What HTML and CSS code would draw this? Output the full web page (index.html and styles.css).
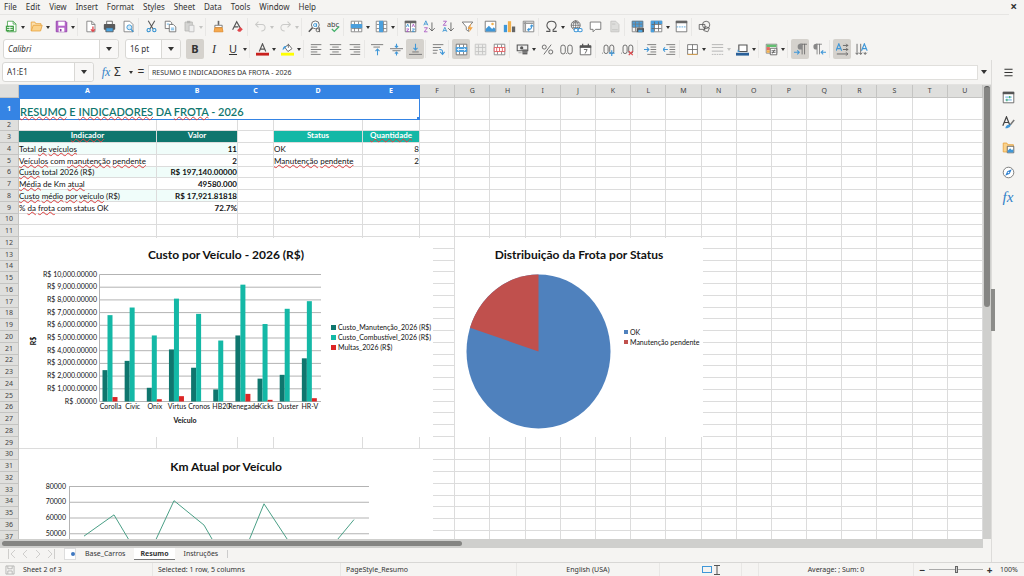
FILE: index.html
```html
<!DOCTYPE html>
<html lang="pt-BR">
<head>
<meta charset="utf-8">
<title>Resumo - Frota 2026</title>
<link rel="stylesheet" href="styles.css">
</head>
<body>

<svg class="sprite" aria-hidden="true">
  <!-- standard toolbar -->
  <symbol id="i-new" viewBox="0 0 16 16"><path d="M3 1.5h7l3.5 3.5v9.500H3z" fill="#fff" stroke="#43a047"/><path d="M1 7h10v7H1z" fill="#43a047"/><path d="M2.500 9.300h7M2.500 11.700h7M6 8v5" stroke="#fff"/><path d="M10 1.500V5h3.500" fill="none" stroke="#43a047"/></symbol>
  <symbol id="i-open" viewBox="0 0 16 16"><path d="M1.500 13.500v-11h4.500l1 2h6.500v2" fill="#fbe0ae" stroke="#e8a33d"/><path d="M1.500 13.500l2.500-7h11l-2 7z" fill="#fbd28b" stroke="#e8a33d"/></symbol>
  <symbol id="i-save" viewBox="0 0 16 16"><path d="M1.500 1.500h11.500l1.500 1.500v11.500h-13z" fill="#b565c9" stroke="#8e3aa6"/><path d="M4 2h8v5H4z" fill="#fff"/><path d="M4.500 9.500h7v5h-7z" fill="#fff"/><path d="M6 11h2v3H6z" fill="#8e3aa6"/></symbol>
  <symbol id="i-pdf" viewBox="0 0 16 16"><path d="M3.500 14.500v-13h6l4 4v9z" fill="#fff" stroke="#777"/><path d="M9.500 1.500v4h4" fill="none" stroke="#777"/><path d="M11 8v6M8.500 11.500L11 14l2.500-2.500" fill="none" stroke="#e0474c" stroke-width="1.600"/></symbol>
  <symbol id="i-print" viewBox="0 0 16 16"><path d="M4.500 1.500h7v4h-7z" fill="#fff" stroke="#555"/><rect x="1" y="5" width="14" height="7" rx="1" fill="#5a5a5a"/><path d="M3.500 9.500h9v5h-9z" fill="#4aa3df" stroke="#555"/></symbol>
  <symbol id="i-preview" viewBox="0 0 16 16"><path d="M2.500 14.500v-13h7l4 4v9z" fill="#fff" stroke="#777"/><circle cx="9" cy="9" r="3" fill="#d4ebfa" stroke="#2f8fd0"/><path d="M11 11.500l3 3" stroke="#2f8fd0" stroke-width="1.500"/></symbol>
  <symbol id="i-cut" viewBox="0 0 16 16"><path d="M4 1l6 10M12 1L6 11" stroke="#555" stroke-width="1.300"/><circle cx="4.500" cy="12.500" r="2" fill="none" stroke="#2f8fd0" stroke-width="1.300"/><circle cx="11.500" cy="12.500" r="2" fill="none" stroke="#2f8fd0" stroke-width="1.300"/></symbol>
  <symbol id="i-copy" viewBox="0 0 16 16"><path d="M1.500 1.500h6l2 2v7h-8z" fill="#fff" stroke="#666"/><path d="M6.500 5.500h5l3 3v6h-8z" fill="#fff" stroke="#666"/><path d="M8.500 10h4M8.500 12h4M3.500 5h3" stroke="#4aa3df"/></symbol>
  <symbol id="i-paste" viewBox="0 0 16 16"><path d="M2.500 2.500h9v11h-9z" fill="#d5d5d3" stroke="#b5b5b3"/><path d="M5 1h4v3H5z" fill="#b5b5b3"/><path d="M7.500 6.500h6v8h-6z" fill="#efefef" stroke="#bbb"/></symbol>
  <symbol id="i-clone" viewBox="0 0 16 16"><path d="M8 1v5" stroke="#666" stroke-width="2"/><path d="M3.500 6.500h9v3h-9z" fill="#fff" stroke="#666"/><path d="M3.500 9.500h9l1 5h-11z" fill="#f5a94d" stroke="#e08a2a"/></symbol>
  <symbol id="i-clear" viewBox="0 0 16 16"><path d="M2 12L7 2l4.500 8M4 8.500h5" fill="none" stroke="#555" stroke-width="1.400"/><path d="M7.500 12.500l4-4 3 3-3 3h-2z" fill="#e0474c"/></symbol>
  <symbol id="i-undo" viewBox="0 0 16 16"><path d="M5.500 2L2 5.500 5.500 9M2 5.500h8c5 0 5 8-1 8" fill="none" stroke="#cacac8" stroke-width="1.300"/></symbol>
  <symbol id="i-redo" viewBox="0 0 16 16"><path d="M10.500 2L14 5.500 10.500 9M14 5.500H6c-5 0-5 8 1 8" fill="none" stroke="#cacac8" stroke-width="1.300"/></symbol>
  <symbol id="i-find" viewBox="0 0 16 16"><circle cx="9" cy="6" r="4.800" fill="#fff" stroke="#555"/><path d="M5.500 9.500L1 14.500" stroke="#555" stroke-width="1.800"/><circle cx="8.600" cy="6.200" r="1.800" fill="none" stroke="#2f8fd0"/><path d="M10.600 4v4.500" stroke="#2f8fd0"/><circle cx="12" cy="12.500" r="2" fill="none" stroke="#555"/><path d="M14.200 9v6" stroke="#555"/></symbol>
  <symbol id="i-spell" viewBox="0 0 16 16"><text x="0" y="8" font-size="9" fill="#444">abc</text><path d="M6 11l3 3 6-6" fill="none" stroke="#43b06a" stroke-width="1.600"/></symbol>
  <symbol id="i-row" viewBox="0 0 16 16"><path d="M1.500 1.500h13v13h-13zM5.500 2v12M10.500 2v12M2 5.500h12M2 10.500h12" fill="#fff" stroke="#777"/><path d="M1 5h14v5H1z" fill="#4a9fdd"/></symbol>
  <symbol id="i-col" viewBox="0 0 16 16"><path d="M1.500 1.500h13v13h-13zM5.500 2v12M10.500 2v12M2 5.500h12M2 10.500h12" fill="#fff" stroke="#777"/><path d="M5 1h5v14H5z" fill="#4a9fdd"/></symbol>
  <symbol id="i-sort" viewBox="0 0 16 16"><path d="M1.500 1.500h13v13h-13zM8 2v12" fill="#fff" stroke="#666"/><path d="M1 1h14v3H1z" fill="#666"/><path d="M3 8.500l1.500-3.500L6 8.500M10 11h3l-3 3h3" fill="none" stroke="#2f8fd0"/><path d="M3 11h3l-3 3h3M10 8.500L11.500 5 13 8.500" fill="none" stroke="#a54fc0"/></symbol>
  <symbol id="i-az" viewBox="0 0 16 16"><path d="M1 6.500L3.500 1 6 6.500M2 5h3" fill="none" stroke="#2f8fd0"/><path d="M1.500 9.500h4l-4 5h4" fill="none" stroke="#a54fc0"/><path d="M11 3v10.500M7.500 10l3.500 3.500 3.500-3.500" fill="none" stroke="#555"/></symbol>
  <symbol id="i-za" viewBox="0 0 16 16"><path d="M1 14.500L3.500 9 6 14.500M2 13h3" fill="none" stroke="#2f8fd0"/><path d="M1.500 1.500h4l-4 5h4" fill="none" stroke="#a54fc0"/><path d="M11 3v10.500M7.500 10l3.500 3.500 3.500-3.500" fill="none" stroke="#555"/></symbol>
  <symbol id="i-filter" viewBox="0 0 16 16"><path d="M1.500 2.500h13l-5 6v5.500l-3-2V8.500z" fill="#fff" stroke="#666"/><path d="M12.500 4l-4.500 7h3l-1 4 4.500-6h-3z" fill="#f2a444"/></symbol>
  <symbol id="i-image" viewBox="0 0 16 16"><path d="M1.500 1.500h13v13h-13z" fill="#fff" stroke="#666"/><path d="M2 14v-3l4-4 4 4 2-2 2 2v3z" fill="#3f97d8"/><circle cx="10.500" cy="5" r="1.600" fill="#f2b04d"/></symbol>
  <symbol id="i-chart" viewBox="0 0 16 16"><path d="M1 6h4v9H1z" fill="#3f97d8"/><path d="M6 1.500h4v13.500H6z" fill="#f2b04d"/><path d="M11 8h4v7h-4z" fill="#666"/></symbol>
  <symbol id="i-pivot" viewBox="0 0 16 16"><path d="M1.500 1.500h13v13h-13z" fill="#fff" stroke="#777"/><path d="M2 4h12M4 2v12" stroke="#999" stroke-width="2"/><path d="M7 12c4 0 5-2 5-5M10 8l2-2 2 2M9 10l-2 2 2 2" fill="none" stroke="#3f97d8" stroke-width="1.300"/></symbol>
  <symbol id="i-omega" viewBox="0 0 16 16"><path d="M1.500 14h4.500v-2C0 8 2 1.500 8 1.500s8 6.500 2 10.500v2h4.500" fill="none" stroke="#555" stroke-width="1.300"/></symbol>
  <symbol id="i-link" viewBox="0 0 16 16"><circle cx="7" cy="6.500" r="5.500" fill="#fff" stroke="#555"/><path d="M1.500 6.500h11M7 1v11M3 3.500h8M3 9.500h8M7 1c-4 3-4 8 0 11M7 1c4 3 4 8 0 11" fill="none" stroke="#555" stroke-width="0.800"/><rect x="5" y="10.500" width="5" height="4" rx="2" fill="#fff" stroke="#3f97d8" stroke-width="1.300"/><rect x="10" y="10.500" width="5" height="4" rx="2" fill="#fff" stroke="#3f97d8" stroke-width="1.300"/></symbol>
  <symbol id="i-comment" viewBox="0 0 16 16"><path d="M1.500 2.500h13v9H8l-3 3v-3H1.500z" fill="#fff" stroke="#666"/></symbol>
  <symbol id="i-page" viewBox="0 0 16 16"><path d="M3.500 1.500h6l4 4v9h-10z" fill="#dededc" stroke="#c0c0be"/><path d="M5 5h4M5 12h7" stroke="#c0c0be"/></symbol>
  <symbol id="i-area" viewBox="0 0 16 16"><path d="M1 1h14v8H1z" fill="#4a9fdd"/><path d="M1.500 1.500h13v13h-13zM5.500 2v12M10 2v12M2 5h12M2 9h12" fill="none" stroke="#777"/><path d="M7 10h9v5H7z" fill="#555"/><path d="M9 12h5v3H9z" fill="#4aa3df"/></symbol>
  <symbol id="i-freeze" viewBox="0 0 16 16"><path d="M1.500 1.500h13v13h-13z" fill="#fff" stroke="#777"/><path d="M1 1h14v4H1zM1 1h4v14H1z" fill="#4a9fdd"/><path d="M5.500 2v12M10.500 2v12M2 5.500h12M2 10.500h12" stroke="#666"/></symbol>
  <symbol id="i-split" viewBox="0 0 16 16"><path d="M1.500 1.500h13v13h-13z" fill="#fff" stroke="#666"/><path d="M1 1h14v3H1z" fill="#666"/><path d="M2 8.500h12" stroke="#3f97d8" stroke-dasharray="2 1"/></symbol>
  <symbol id="i-shapes" viewBox="0 0 16 16"><circle cx="10" cy="6" r="4.500" fill="#f5f4f2" stroke="#555"/><path d="M1.500 5.500h7v6h-7z" fill="none" stroke="#555"/><path d="M9 8l5 2-2 4.500-5-1.500z" fill="none" stroke="#555"/></symbol>
  <!-- formatting toolbar -->
  <symbol id="i-fontcolor" viewBox="0 0 16 16"><path d="M4 10.500L8 1l4 9.500M5.500 7.500h5" fill="none" stroke="#555" stroke-width="1.400"/><path d="M0 12h16v3.500H0z" fill="#c9211e"/></symbol>
  <symbol id="i-highlight" viewBox="0 0 16 16"><path d="M4.500 5l5-3 4 5-5 3.500z" fill="#fff" stroke="#555"/><path d="M2 9c0-4 2-6 5-5l-2 2z" fill="#3f97d8"/><path d="M9 1v5" stroke="#555"/><path d="M0 12h16v3.500H0z" fill="#ffff00"/></symbol>
  <symbol id="i-left" viewBox="0 0 16 16"><path d="M1 2h13M1 5h8M1 8h13M1 11h8M1 14h12" stroke="#666"/></symbol>
  <symbol id="i-center" viewBox="0 0 16 16"><path d="M1 2h14M4 5h8M1 8h14M4 11h8M1 14h14" stroke="#666"/></symbol>
  <symbol id="i-right" viewBox="0 0 16 16"><path d="M2 2h13M7 5h8M2 8h13M7 11h8M3 14h12" stroke="#666"/></symbol>
  <symbol id="i-top" viewBox="0 0 16 16"><path d="M0 2h15M3 5h8" stroke="#666"/><path d="M8 15V7.500M5.500 10L8 7.500l2.500 2.500" fill="none" stroke="#3f97d8" stroke-width="1.300"/></symbol>
  <symbol id="i-middle" viewBox="0 0 16 16"><path d="M0 7h16M3 9.500h10" stroke="#666"/><path d="M8 1v4.500M6 3.500l2 2 2-2M8 15.500V11M6 13l2-2 2 2" fill="none" stroke="#3f97d8" stroke-width="1.300"/></symbol>
  <symbol id="i-bottom" viewBox="0 0 16 16"><path d="M0 14h16M4 11h8" stroke="#666"/><path d="M8 1v7.500M5.500 6L8 8.500 10.500 6" fill="none" stroke="#3f97d8" stroke-width="1.300"/></symbol>
  <symbol id="i-wrap" viewBox="0 0 16 16"><path d="M1 2h13M1 5.500h10M1 9h6M1 12.500h5" stroke="#666"/><path d="M9 8c4 0 4 1 4 5M10 11l3 3 2.500-3" fill="none" stroke="#3f97d8" stroke-width="1.300"/></symbol>
  <symbol id="i-merge" viewBox="0 0 16 16"><path d="M1.500 1.500h13v13h-13zM5.500 2v3M10.500 2v3M5.500 11v3M10.500 11v3" fill="#fff" stroke="#666"/><path d="M1 5h14v6H1z" fill="#4a9fdd"/><path d="M3 8h10M5 6.500L3 8l2 1.500M11 6.500L13 8l-2 1.500" fill="none" stroke="#fff"/></symbol>
  <symbol id="i-unmerge" viewBox="0 0 16 16"><path d="M1.500 1.500h13v13h-13zM5.500 2v12M10.500 2v12M2 5.500h12M2 10.500h12" fill="#ededeb" stroke="#c2c2c0"/></symbol>
  <symbol id="i-splitcell" viewBox="0 0 16 16"><path d="M1.500 1.500h13v13h-13zM5.500 2v12M10.500 2v12" fill="#fff" stroke="#777"/><path d="M1.500 5.500h13v5h-13zM8 6v4M4.500 6v4M11.500 6v4" fill="#fff" stroke="#e0474c"/></symbol>
  <symbol id="i-money" viewBox="0 0 16 16"><path d="M1.500 2.500h13v7h-13z" fill="#eee" stroke="#555" stroke-width="1.300"/><circle cx="7" cy="6" r="2" fill="#555"/><path d="M8 8h6v6H8z" fill="#555"/><path d="M3 12h4M8 10h6M8 12h6" stroke="#999"/></symbol>
  <symbol id="i-percent" viewBox="0 0 16 16"><circle cx="4" cy="5" r="2.500" fill="none" stroke="#555"/><circle cx="12" cy="11" r="2.500" fill="none" stroke="#555"/><path d="M12.500 2l-9 12" stroke="#555"/></symbol>
  <symbol id="i-number" viewBox="0 0 16 16"><rect x="1" y="2.500" width="5.500" height="11" rx="2.700" fill="none" stroke="#555"/><rect x="9.500" y="2.500" width="5.500" height="11" rx="2.700" fill="none" stroke="#555"/><path d="M7.500 12.500h1v1h-1z" fill="#555"/></symbol>
  <symbol id="i-date" viewBox="0 0 16 16"><path d="M1.500 3.500h13v11h-13z" fill="#fff" stroke="#555"/><path d="M1 3h14v3H1z" fill="#555"/><path d="M4.500 1v3M11.500 1v3" stroke="#555" stroke-width="1.500"/><path d="M6 8h4l-2.500 5" fill="none" stroke="#555"/></symbol>
  <symbol id="i-adddec" viewBox="0 0 16 16"><path d="M0 12h1v1H0z" fill="#555"/><rect x="2.500" y="2.500" width="5" height="10.500" rx="2.500" fill="none" stroke="#555"/><rect x="9.500" y="2.500" width="5" height="10.500" rx="2.500" fill="none" stroke="#555"/><path d="M12 9v7M8.500 12.500h7" stroke="#3f97d8" stroke-width="1.400"/></symbol>
  <symbol id="i-deldec" viewBox="0 0 16 16"><path d="M0 12h1v1H0z" fill="#555"/><rect x="2.500" y="2.500" width="5" height="10.500" rx="2.500" fill="none" stroke="#555"/><rect x="9.500" y="2.500" width="5" height="10.500" rx="2.500" fill="none" stroke="#555"/><path d="M9.500 10l5 5M14.500 10l-5 5" stroke="#e0474c" stroke-width="1.400"/></symbol>
  <symbol id="i-indent" viewBox="0 0 16 16"><path d="M4 2h11M8 5h7M8 8h7M8 11h7M4 14h11" stroke="#666"/><path d="M0 8h6M3.500 5.500L6 8l-2.500 2.500" fill="none" stroke="#3f97d8" stroke-width="1.300"/></symbol>
  <symbol id="i-outdent" viewBox="0 0 16 16"><path d="M4 2h11M8 5h7M8 8h7M8 11h7M4 14h11" stroke="#666"/><path d="M0 8h6M2.500 5.500L0 8l2.500 2.500" fill="none" stroke="#3f97d8" stroke-width="1.300"/></symbol>
  <symbol id="i-borders" viewBox="0 0 16 16"><path d="M2 2h12v12H2zM8 2v12M2 8h12" fill="#fff" stroke="#666"/><path d="M2 14h12" stroke="#e8a33d"/></symbol>
  <symbol id="i-bstyle" viewBox="0 0 16 16"><path d="M1 2h14M1 5.500h14M1 10h14" stroke="#aaa"/><path d="M1 14h14" stroke="#aaa" stroke-dasharray="2 1"/></symbol>
  <symbol id="i-bcolor" viewBox="0 0 16 16"><path d="M3.500 2.500h10v8h-10z" fill="#fff" stroke="#555" stroke-width="1.400"/><path d="M2 8l3 3H2z" fill="#3f97d8"/><path d="M0 12h16v3.500H0z" fill="#2a6099"/></symbol>
  <symbol id="i-cond" viewBox="0 0 16 16"><path d="M1.500 1.500h13v11h-13z" fill="#fff" stroke="#777"/><path d="M2 2h12v3H2z" fill="#63bf72"/><path d="M2 5h4v4H2z" fill="#e86a5f"/><path d="M2 9h4v3H2z" fill="#f2b04d"/><path d="M6.500 6.500h8v8h-8z" fill="#fff" stroke="#555"/><path d="M8 9.500h5M8 11.500h5M12 8l-3 5" stroke="#555"/></symbol>
  <symbol id="i-ltr" viewBox="0 0 16 16"><path d="M10 1v13M13 1v13M7 1.500h9" fill="none" stroke="#666"/><path d="M10 1H8a3.500 3.500 0 0 0 0 7h2z" fill="#888"/><path d="M0 11.500h6.500M4 9l2.500 2.500L4 14" fill="none" stroke="#3f97d8" stroke-width="1.300"/></symbol>
  <symbol id="i-rtl" viewBox="0 0 16 16"><path d="M5 1v13M8 1v13M4 1.500h7" fill="none" stroke="#777"/><path d="M5 1H4a3.500 3.500 0 0 0 0 7h1z" fill="#888"/><path d="M16 11.500H10M12.500 9L10 11.500l2.500 2.500" fill="none" stroke="#3f97d8" stroke-width="1.300"/></symbol>
  <symbol id="i-horz" viewBox="0 0 16 16"><path d="M0 9.500L3.500 1 7 9.500M1.500 7h4" fill="none" stroke="#3f97d8" stroke-width="1.400"/><path d="M8.500 3h6M8.500 8h6M1 13.500h13M12.500 1l2 2-2 2M12.500 6l2 2-2 2M12.500 11.500l2 2-2 2" fill="none" stroke="#555"/></symbol>
  <symbol id="i-vert" viewBox="0 0 16 16"><path d="M8 9.500L11.500 1 15 9.500M9.500 7h4" fill="none" stroke="#3f97d8" stroke-width="1.400"/><path d="M2.500 1v13M7 1v13M12.500 11v3M.500 12l2 2 2-2M5 12l2 2 2-2M10.500 12l2 2 2-2" fill="none" stroke="#555"/></symbol>
  <!-- sidebar -->
  <symbol id="i-menu" viewBox="0 0 16 16"><path d="M3 4h10M3 8h10M3 12h10" stroke="#333" stroke-width="1.500"/></symbol>
  <symbol id="i-props" viewBox="0 0 16 16"><path d="M1.500 1.500h13v13h-13z" fill="#fff" stroke="#555"/><path d="M1 1h14v3H1z" fill="#555"/><path d="M4 7.500h8M4 11h8" stroke="#3f97d8"/><path d="M9.500 6v3M6 9.500v3" stroke="#43b06a" stroke-width="1.500"/></symbol>
  <symbol id="i-styles" viewBox="0 0 16 16"><path d="M1 12L5.500 1 9.500 11M3 8h5.500" fill="none" stroke="#444" stroke-width="1.500"/><path d="M15 5l-5 6" stroke="#777" stroke-width="2"/><path d="M4 15c1-4 4-5 6.500-4.500.500 3-3 5-6.500 4.500z" fill="#3f97d8"/></symbol>
  <symbol id="i-gallery" viewBox="0 0 16 16"><path d="M1.500 13.500v-11h4.500l1 2h7v9z" fill="#fbd28b" stroke="#e8a33d"/><path d="M6.500 6.500h8v8h-8z" fill="#fff" stroke="#555"/><path d="M7 14v-2l3-3 2 2 2-1v4z" fill="#3f97d8"/></symbol>
  <symbol id="i-navigator" viewBox="0 0 16 16"><circle cx="8" cy="8" r="6.500" fill="#fff" stroke="#666"/><path d="M12 4L9.500 9.500 4 12l2.500-5.500z" fill="#2f80d0"/><circle cx="8" cy="8" r="1" fill="#fff"/></symbol>
  <!-- tab navigation and status bar -->
  <symbol id="i-first" viewBox="0 0 10 10"><path d="M1.500 0v10M8 1L4 5l4 4" fill="none" stroke="#cfcecc"/></symbol>
  <symbol id="i-prev" viewBox="0 0 10 10"><path d="M7 1L3 5l4 4" fill="none" stroke="#cfcecc"/></symbol>
  <symbol id="i-next" viewBox="0 0 10 10"><path d="M3 1l4 4-4 4" fill="none" stroke="#cfcecc"/></symbol>
  <symbol id="i-last" viewBox="0 0 10 10"><path d="M8.500 0v10M2 1l4 4-4 4" fill="none" stroke="#cfcecc"/></symbol>
  <symbol id="i-doc" viewBox="0 0 16 16"><path d="M1.500 1.500h13v13h-13z" fill="none" stroke="#999"/><path d="M4.500 2v4h7V2M4.500 14V9.500h7V14" fill="none" stroke="#999"/></symbol>
</svg>

<header class="menubar">
  <nav class="menus">
    <button>File</button><button>Edit</button><button>View</button><button>Insert</button><button>Format</button><button>Styles</button><button>Sheet</button><button>Data</button><button>Tools</button><button>Window</button><button>Help</button>
  </nav>
  <button class="close" aria-label="Close">×</button>
</header>

<div class="toolbar">
  <button class="tool drop" title="New"><svg><use href="#i-new"/></svg></button>
  <button class="tool drop" title="Open"><svg><use href="#i-open"/></svg></button>
  <button class="tool drop" title="Save"><svg><use href="#i-save"/></svg></button>
  <i class="sep"></i>
  <button class="tool" title="Export as PDF"><svg><use href="#i-pdf"/></svg></button>
  <button class="tool" title="Print"><svg><use href="#i-print"/></svg></button>
  <button class="tool" title="Print preview"><svg><use href="#i-preview"/></svg></button>
  <i class="sep"></i>
  <button class="tool" title="Cut"><svg><use href="#i-cut"/></svg></button>
  <button class="tool" title="Copy"><svg><use href="#i-copy"/></svg></button>
  <button class="tool drop off" title="Paste"><svg><use href="#i-paste"/></svg></button>
  <i class="sep"></i>
  <button class="tool" title="Clone formatting"><svg><use href="#i-clone"/></svg></button>
  <button class="tool" title="Clear formatting"><svg><use href="#i-clear"/></svg></button>
  <i class="sep"></i>
  <button class="tool drop off" title="Undo"><svg><use href="#i-undo"/></svg></button>
  <button class="tool drop off" title="Redo"><svg><use href="#i-redo"/></svg></button>
  <i class="sep"></i>
  <button class="tool" title="Find and replace"><svg><use href="#i-find"/></svg></button>
  <button class="tool" title="Spelling"><svg><use href="#i-spell"/></svg></button>
  <i class="sep"></i>
  <button class="tool drop" title="Row"><svg><use href="#i-row"/></svg></button>
  <button class="tool drop" title="Column"><svg><use href="#i-col"/></svg></button>
  <i class="sep"></i>
  <button class="tool" title="Sort"><svg><use href="#i-sort"/></svg></button>
  <button class="tool" title="Sort ascending"><svg><use href="#i-az"/></svg></button>
  <button class="tool" title="Sort descending"><svg><use href="#i-za"/></svg></button>
  <button class="tool" title="AutoFilter"><svg><use href="#i-filter"/></svg></button>
  <i class="sep"></i>
  <button class="tool" title="Image"><svg><use href="#i-image"/></svg></button>
  <button class="tool" title="Chart"><svg><use href="#i-chart"/></svg></button>
  <button class="tool" title="Pivot table"><svg><use href="#i-pivot"/></svg></button>
  <i class="sep"></i>
  <button class="tool drop" title="Symbol"><svg><use href="#i-omega"/></svg></button>
  <button class="tool" title="Hyperlink"><svg><use href="#i-link"/></svg></button>
  <button class="tool" title="Comment"><svg><use href="#i-comment"/></svg></button>
  <button class="tool off" title="Headers and footers"><svg><use href="#i-page"/></svg></button>
  <i class="sep"></i>
  <button class="tool" title="Print area"><svg><use href="#i-area"/></svg></button>
  <button class="tool drop" title="Freeze"><svg><use href="#i-freeze"/></svg></button>
  <button class="tool" title="Split window"><svg><use href="#i-split"/></svg></button>
  <i class="sep"></i>
  <button class="tool" title="Draw functions"><svg><use href="#i-shapes"/></svg></button>
</div>

<div class="toolbar format">
  <div class="combo font-name"><input type="text" value="Calibri" aria-label="Font name"><button aria-label="Font list"></button></div>
  <div class="combo font-size"><input type="text" value="16 pt" aria-label="Font size"><button aria-label="Size list"></button></div>
  <button class="tool on" title="Bold"><b>B</b></button>
  <button class="tool" title="Italic"><em>I</em></button>
  <button class="tool drop" title="Underline"><u>U</u></button>
  <i class="sep"></i>
  <button class="tool drop" title="Font color"><svg><use href="#i-fontcolor"/></svg></button>
  <button class="tool drop" title="Highlight"><svg><use href="#i-highlight"/></svg></button>
  <i class="sep"></i>
  <button class="tool" title="Align left"><svg><use href="#i-left"/></svg></button>
  <button class="tool" title="Center"><svg><use href="#i-center"/></svg></button>
  <button class="tool" title="Align right"><svg><use href="#i-right"/></svg></button>
  <i class="sep"></i>
  <button class="tool" title="Align top"><svg><use href="#i-top"/></svg></button>
  <button class="tool" title="Center vertically"><svg><use href="#i-middle"/></svg></button>
  <button class="tool on" title="Align bottom"><svg><use href="#i-bottom"/></svg></button>
  <i class="sep"></i>
  <button class="tool" title="Wrap text"><svg><use href="#i-wrap"/></svg></button>
  <i class="sep"></i>
  <button class="tool on" title="Merge and center"><svg><use href="#i-merge"/></svg></button>
  <button class="tool off" title="Merge cells"><svg><use href="#i-unmerge"/></svg></button>
  <button class="tool" title="Unmerge cells"><svg><use href="#i-splitcell"/></svg></button>
  <i class="sep"></i>
  <button class="tool drop" title="Currency"><svg><use href="#i-money"/></svg></button>
  <button class="tool" title="Percent"><svg><use href="#i-percent"/></svg></button>
  <button class="tool" title="Number"><svg><use href="#i-number"/></svg></button>
  <button class="tool" title="Date"><svg><use href="#i-date"/></svg></button>
  <i class="sep"></i>
  <button class="tool" title="Add decimal place"><svg><use href="#i-adddec"/></svg></button>
  <button class="tool" title="Delete decimal place"><svg><use href="#i-deldec"/></svg></button>
  <i class="sep"></i>
  <button class="tool" title="Increase indent"><svg><use href="#i-indent"/></svg></button>
  <button class="tool" title="Decrease indent"><svg><use href="#i-outdent"/></svg></button>
  <i class="sep"></i>
  <button class="tool drop" title="Borders"><svg><use href="#i-borders"/></svg></button>
  <button class="tool drop off" title="Border style"><svg><use href="#i-bstyle"/></svg></button>
  <button class="tool drop" title="Border color"><svg><use href="#i-bcolor"/></svg></button>
  <i class="sep"></i>
  <button class="tool drop" title="Conditional"><svg><use href="#i-cond"/></svg></button>
  <i class="sep"></i>
  <button class="tool on" title="Left to right"><svg><use href="#i-ltr"/></svg></button>
  <button class="tool" title="Right to left"><svg><use href="#i-rtl"/></svg></button>
  <i class="sep"></i>
  <button class="tool on" title="Text left to right"><svg><use href="#i-horz"/></svg></button>
  <button class="tool" title="Text top to bottom"><svg><use href="#i-vert"/></svg></button>
</div>

<div class="workspace">
  <main class="main">
    <div class="formula-bar">
      <div class="combo name-box"><input type="text" value="A1:E1" aria-label="Name box"><button aria-label="Names"></button></div>
      <button class="fx" title="Function wizard">fx</button>
      <button class="sigma" title="Select function">Σ</button>
      <button class="equals" title="Formula">=</button>
      <input class="formula" type="text" value="RESUMO E INDICADORES DA FROTA - 2026" aria-label="Input line">
      <button class="expand" aria-label="Expand formula bar"></button>
    </div>

    <div class="sheet-area">
      <div class="sheet">
        <table class="cells">
          <colgroup id="cols"></colgroup>
          <thead><tr id="col-heads"></tr></thead>
          <tbody id="rows"></tbody>
        </table>
        <svg class="chart chart-cost" id="chart-cost" width="414" height="199"></svg>
        <svg class="chart chart-status" id="chart-status" width="248" height="199"></svg>
        <svg class="chart chart-km" id="chart-km" width="414" height="199"></svg>
      </div>
      <div class="vscroll"><i class="thumb"></i></div>
    </div>
    <div class="hscroll"><i class="thumb"></i></div>

    <div class="tabs">
      <div class="tab-nav">
        <button title="First sheet"><svg><use href="#i-first"/></svg></button>
        <button title="Previous sheet"><svg><use href="#i-prev"/></svg></button>
        <button title="Next sheet"><svg><use href="#i-next"/></svg></button>
        <button title="Last sheet"><svg><use href="#i-last"/></svg></button>
      </div>
      <button class="add-sheet" aria-label="Add sheet"></button>
      <button class="tab">Base_Carros</button>
      <button class="tab current">Resumo</button>
      <button class="tab">Instruções</button>
      <i class="tab-end"></i>
    </div>
  </main>

  <aside class="sidebar">
    <button title="Settings"><svg><use href="#i-menu"/></svg></button>
    <button title="Properties"><svg><use href="#i-props"/></svg></button>
    <button title="Styles"><svg><use href="#i-styles"/></svg></button>
    <button title="Gallery"><svg><use href="#i-gallery"/></svg></button>
    <button title="Navigator"><svg><use href="#i-navigator"/></svg></button>
    <button class="fx" title="Functions">fx</button>
    <i class="handle"></i>
  </aside>
</div>

<footer class="status">
  <span class="doc"><svg><use href="#i-doc"/></svg>Sheet 2 of 3</span>
  <span>Selected: 1 row, 5 columns</span>
  <span>PageStyle_Resumo</span>
  <span class="mid">English (USA)</span>
  <span class="mode"><i class="insert"></i><svg width="6" height="10" viewBox="0 0 6 10"><path d="M0 .5h6M0 9.500h6M3 0v10" stroke="#555"/></svg></span>
  <span></span>
  <span class="mid">Average: ; Sum: 0</span>
  <span class="zoom"><button aria-label="Zoom out">−</button><input type="range" min="0" max="100" value="50" aria-label="Zoom" id="zoom"><button aria-label="Zoom in">+</button><label for="zoom">100%</label></span>
</footer>

<script src="script.js"></script>
</body>
</html>
```
FILE: styles.css
```css
* {
  box-sizing: border-box;
}

body {
  margin: 0;
  height: 100vh;
  display: flex;
  flex-direction: column;
  overflow: hidden;
  background: #f5f4f2;
  color: #333;
  font: 8px/12px "Noto Sans", "Liberation Sans", sans-serif;
}

button,
input {
  margin: 0;
  padding: 0;
  border: 0;
  background: none;
  color: inherit;
  font: inherit;
}

.sprite {
  display: none;
}

.sprite text {
  font-family: "Noto Sans", sans-serif;
}

/* menu bar */
.menubar {
  display: flex;
  justify-content: space-between;
  height: 15px;
  flex: none;
  margin: 0 15px 0 0;
  border-bottom: 1px solid #e6e5e3;
}

.menus {
  display: flex;
  gap: 9px;
  padding-left: 4px;
}

.close {
  margin-right: -8px;
  font-size: 12px;
  font-weight: bold;
}

/* toolbars */
.toolbar {
  display: flex;
  align-items: center;
  gap: 1px;
  flex: none;
  height: 23px;
  padding-left: 2px;
}

.toolbar.format {
  height: 22px;
  padding-left: 3px;
}

.tool {
  position: relative;
  display: flex;
  align-items: center;
  justify-content: center;
  flex: none;
  width: 18px;
  height: 20px;
  border-radius: 2px;
  font-size: 11px;
}

.tool svg {
  width: 13px;
  height: 13px;
}

.tool.on {
  background: #d5d2cd;
}

.tool em {
  font-family: "Liberation Serif", serif;
  font-size: 12px;
}

.tool.drop {
  width: 24px;
  padding-right: 6px;
}

.drop::after,
.sigma::after {
  content: "";
  position: absolute;
  right: 1px;
  top: 9px;
  border: 2px solid transparent;
  border-top: 3px solid #333;
  border-bottom: 0;
}

.off::after {
  border-top-color: #c4c4c2;
}

.sep {
  width: 3px;
  height: 18px;
  flex: none;
  border-left: 1px solid #e8e7e5;
}

.combo {
  display: flex;
  height: 20px;
  border: 1px solid #d9d8d5;
  border-radius: 3px;
  background: #fff;
}

.combo input {
  flex: 1;
  min-width: 0;
  padding-left: 4px;
}

.combo button {
  display: flex;
  align-items: center;
  justify-content: center;
  width: 19px;
  border-left: 1px solid #d9d8d5;
  background: #f8f7f6;
  border-radius: 0 3px 3px 0;
}

.combo button::after,
.expand::after {
  content: "";
  border: 3px solid transparent;
  border-top: 4px solid #333;
  border-bottom: 0;
}

.format .font-name {
  width: 116px;
  margin-right: 5px;
  font-style: italic;
}

.format .font-size {
  width: 56px;
  margin-right: 4px;
}

/* workspace */
.workspace {
  display: flex;
  flex: 1;
  min-height: 0;
}

.main {
  display: flex;
  flex-direction: column;
  flex: 1;
  min-width: 0;
}

.formula-bar {
  display: flex;
  align-items: center;
  flex: none;
  height: 25px;
  padding: 0 2px;
  border-bottom: 1px solid #e4e3e1;
}

.name-box {
  width: 92px;
}

.fx {
  color: #2f80c8;
  font: italic 12px "Liberation Serif", serif;
}

.formula-bar .fx {
  width: 12px;
  margin-left: 6px;
}

.sigma {
  position: relative;
  width: 22px;
  height: 20px;
  padding-left: 2px;
  text-align: left;
  font-size: 12px;
}

.equals {
  width: 14px;
  font-size: 12px;
}

.formula {
  flex: 1;
  height: 15px;
  padding-left: 3px;
  border: 1px solid #e0dfdc;
  background: #fff;
  font-size: 7px;
}

.expand {
  display: flex;
  justify-content: center;
  width: 11px;
}

.sheet-area {
  display: flex;
  flex: 1;
  min-height: 0;
}

.sheet {
  position: relative;
  flex: 1;
  min-width: 0;
  overflow: hidden;
  background: #fff;
}

.cells {
  width: 100%;
  table-layout: fixed;
  border-collapse: separate;
  border-spacing: 0;
}

.cells th,
.cells td {
  height: 12px;
  padding: 0;
  border-right: 1px solid #dcdcdc;
  border-bottom: 1px solid #dcdcdc;
  line-height: 10px;
  white-space: nowrap;
}

.cells thead th {
  height: 13px;
}

.cells tr.short th,
.cells tr.short td {
  height: 11px;
}

.cells tr.tall th,
.cells tr.tall td {
  height: 22px;
}

.cells th {
  background: #dfdfdd;
  border-color: #c4c4c2;
  color: #444;
  font-weight: normal;
  font-size: 7px;
}

.cells th.picked {
  background: #3584e4;
  border-color: #3584e4;
  color: #fff;
  font-weight: bold;
}

.cells td {
  color: #111;
  font-family: Lato, sans-serif;
  font-size: 8px;
}

.cells td.title {
  position: relative;
  border: 1px solid #3584e4;
  color: #0f766e;
  font-size: 11px;
  font-weight: 600;
  line-height: 14px;
  vertical-align: bottom;
}

.title::after {
  content: "";
  position: absolute;
  right: -1px;
  bottom: -1px;
  width: 3px;
  height: 3px;
  background: #3584e4;
}

.cells td.head {
  background: #0f766e;
  color: #fff;
  font-weight: bold;
  line-height: 8px;
  text-align: center;
  vertical-align: top;
}

.cells td.teal {
  background: #14b8a6;
}

.cells td.mint {
  background: #f0fdfa;
}

.cells td.num {
  text-align: right;
}

.cells td.strong {
  font-weight: bold;
}

.typo {
  text-decoration: underline wavy #e04040 1px;
  text-underline-offset: 0;
  text-decoration-skip-ink: none;
}

/* charts float over the cells */
.chart {
  position: absolute;
  background: #fff;
  font-family: Lato, sans-serif;
  font-size: 7px;
  fill: #111;
}

.chart-cost {
  left: 19px;
  top: 153px;
}

.chart-status {
  left: 455px;
  top: 153px;
}

.chart-km {
  left: 19px;
  top: 364px;
}

.chart .heading {
  font-size: 12px;
  font-weight: bold;
  text-anchor: middle;
}

.chart .axis-name {
  font-weight: bold;
  text-anchor: middle;
}

.chart .value {
  text-anchor: end;
}

.chart .category {
  text-anchor: middle;
}

.chart .grid {
  stroke: #b3b3b3;
}

/* scroll bars */
.vscroll {
  flex: none;
  width: 8px;
  padding: 1px;
  background: #cfcfcd;
}

.vscroll .thumb {
  display: block;
  height: 49%;
  border-radius: 3px;
  background: #858583;
  border-top: 1px solid #555;
}

.hscroll {
  flex: none;
  height: 9px;
  margin-right: 8px;
  padding: 2px;
  background: #cfcfcd;
}

.hscroll .thumb {
  display: block;
  width: 47%;
  height: 5px;
  border-radius: 3px;
  background: #858583;
}

/* sheet tabs */
.tabs {
  display: flex;
  align-items: flex-start;
  flex: none;
  height: 14px;
}

.tab-nav {
  display: flex;
  align-items: center;
  justify-content: space-around;
  width: 52px;
  height: 12px;
  margin-left: 5px;
}

.tab-nav button {
  display: flex;
}

.tab-nav svg {
  width: 10px;
  height: 10px;
}

.add-sheet {
  position: relative;
  width: 12px;
  height: 12px;
  margin-left: 7px;
  border: 1px solid #ddd;
  background: #fff;
}

.add-sheet::after {
  content: "";
  position: absolute;
  right: 0;
  top: 3px;
  width: 4px;
  height: 4px;
  border-radius: 2px;
  background: #3f78c0;
}

.tab {
  padding: 0 9px;
  height: 12px;
  font-size: 7px;
}

.tab.current {
  padding: 0 6px;
  border-bottom: 1px solid #777;
  background: #fff;
  font-weight: bold;
}

.tab-end {
  height: 8px;
  margin-top: 2px;
  border-left: 1px solid #ccc;
}

/* sidebar */
.sidebar {
  position: relative;
  display: flex;
  flex-direction: column;
  align-items: center;
  gap: 7px;
  flex: none;
  width: 33px;
  padding-top: 3px;
  border-left: 1px solid #dddcda;
}

.sidebar button {
  display: flex;
  align-items: center;
  justify-content: center;
  width: 18px;
  height: 18px;
}

.sidebar svg {
  width: 13px;
  height: 13px;
}

.sidebar .fx {
  font-size: 15px;
}

.sidebar .handle {
  position: absolute;
  left: -1px;
  top: 229px;
  width: 4px;
  height: 42px;
  background: #8c8c8a;
}

/* status bar */
.status {
  display: grid;
  grid-template-columns: 153fr 188fr 176fr 143fr 82fr 17fr 155fr 110fr;
  flex: none;
  height: 14px;
  border-top: 1px solid #d8d7d5;
  font-size: 7px;
}

.status > span {
  display: flex;
  align-items: center;
  padding-left: 5px;
  border-right: 1px solid #e8e7e5;
}

.status > .doc {
  gap: 8px;
}

.doc svg {
  width: 10px;
  height: 10px;
}

.status > .mid {
  justify-content: center;
  padding: 0;
}

.status > .mode {
  justify-content: center;
  gap: 2px;
  padding-left: 20px;
}

.insert {
  width: 10px;
  height: 7px;
  border: 1px solid #3f97d8;
}

.status > .zoom {
  gap: 3px;
  border: 0;
}

.zoom button {
  width: 7px;
  font-size: 10px;
  font-weight: bold;
}

.zoom input {
  -webkit-appearance: none;
  width: 54px;
  height: 8px;
  background: linear-gradient(#aaa, #aaa) center / 100% 1px no-repeat;
}

.zoom input::-webkit-slider-thumb {
  -webkit-appearance: none;
  width: 3px;
  height: 7px;
  border: 1px solid #666;
  background: #ccc;
}

.zoom label {
  margin-left: 4px;
}
```
FILE: script.js
```js
var COLS = 'ABCDEFGHIJKLMNOPQRSTU'.split('');
var WIDTHS = { A: 138, B: 81, C: 36, D: 89, E: 57 };
var ROWS = 37;

// *word* marks a word the spell checker underlines
var CELLS = {
  A1: ['*RESUMO* E *INDICADORES* DA *FROTA* - 2026', 'title'],
  A3: ['*Indicador*', 'head'],
  B3: ['Valor', 'head'],
  D3: ['Status', 'head teal'],
  E3: ['*Quantidade*', 'head teal'],
  A4: ['Total *de* *veículos*', 'mint'],
  B4: ['11', 'num strong mint'],
  D4: ['OK', ''],
  E4: ['8', 'num'],
  A5: ['*Veículos* com *manutenção* *pendente*', ''],
  B5: ['2', 'num strong'],
  D5: ['*Manutenção* *pendente*', ''],
  E5: ['2', 'num'],
  A6: ['*Custo* total 2026 (R$)', 'mint'],
  B6: ['R$ 197,140.00000', 'num strong mint'],
  A7: ['*Média* de Km *atual*', ''],
  B7: ['49580.000', 'num strong'],
  A8: ['*Custo* *médio* *por* *veículo* (R$)', 'mint'],
  B8: ['R$ 17,921.81818', 'num strong mint'],
  A9: ['% *da* *frota* com status OK', ''],
  B9: ['72.7%', 'num strong']
};

var COSTS = [
  ['Corolla', 2470, 6800, 350],
  ['Civic', 3200, 7400, 0],
  ['Onix', 1080, 5200, 180],
  ['Virtus', 4100, 8100, 420],
  ['Cronos', 2660, 6900, 0],
  ['HB20', 950, 4800, 0],
  ['Renegade', 5200, 9200, 600],
  ['Kicks', 1800, 6100, 130],
  ['Duster', 2100, 7300, 0],
  ['HR-V', 3400, 7900, 260]
];
var COST_COLORS = ['#0f766e', '#14b8a6', '#dc2626'];

var KM = [48500, 62000, 30000, 71000, 55500, 22500, 69000, 40000, 36000, 59000];

drawSheet();
drawCosts();
drawStatus();
drawKm();

function drawSheet() {
  var cols = '<col style="width:19px">';
  var heads = '<th></th>';
  COLS.forEach(function(c) {
    cols += WIDTHS[c] ? '<col style="width:' + WIDTHS[c] + 'px">' : '<col>';
    heads += '<th' + (WIDTHS[c] ? ' class="picked"' : '') + '>' + c + '</th>';
  });
  document.getElementById('cols').innerHTML = cols;
  document.getElementById('col-heads').innerHTML = heads;

  var html = '';
  for (var r = 1; r <= ROWS; r++) {
    html += '<tr class="' + (r == 1 ? 'tall' : r % 4 == 2 ? 'short' : '') + '">';
    html += '<th' + (r == 1 ? ' class="picked"' : '') + '>' + r + '</th>';
    for (var i = 0; i < COLS.length; i++) {
      var cell = CELLS[COLS[i] + r] || ['', ''];
      var text = cell[0].replace(/\*([^*]+)\*/g, '<span class="typo">$1</span>');
      html += '<td class="' + cell[1] + '"' + (r == 1 && i == 0 ? ' colspan="5"' : '') + '>' + text + '</td>';
      if (r == 1 && i == 0) i = 4;
    }
    html += '</tr>';
  }
  document.getElementById('rows').innerHTML = html;
}

function text(x, y, cls, str, extra) {
  return '<text x="' + x + '" y="' + y + '" class="' + cls + '" ' + (extra || '') + '>' + str + '</text>';
}

function rect(x, y, w, h, color) {
  return '<rect x="' + x + '" y="' + y + '" width="' + w + '" height="' + h + '" fill="' + color + '"/>';
}

function line(x1, y1, x2, y2) {
  return '<line class="grid" x1="' + x1 + '" y1="' + y1 + '" x2="' + x2 + '" y2="' + y2 + '"/>';
}

function drawCosts() {
  var left = 80.5, right = 302, top = 36.5, bottom = 163.5;
  var step = (right - left) / COSTS.length;
  var s = text(207, 21, 'heading', 'Custo por Veículo - 2026 (R$)');
  for (var v = 0; v <= 10; v++) {
    var y = bottom - v * (bottom - top) / 10;
    s += line(left, y, right, y);
    s += text(78, y + 2, 'value', 'R$ ' + (v ? v + ',000' : '') + '.00000');
  }
  s += line(left, top, left, bottom);
  COSTS.forEach(function(row, i) {
    for (var k = 0; k < 3; k++) {
      var h = row[k + 1] * (bottom - top) / 10000;
      s += rect(left + i * step + 3 + k * 5, bottom - h, 5, h, COST_COLORS[k]);
    }
    s += text(left + (i + 0.5) * step, 171, 'category', row[0]);
  });
  s += text(166, 185, 'axis-name', 'Veículo');
  s += text(0, 0, 'axis-name', 'R$', 'transform="translate(17 103) rotate(-90)"');
  ['Custo_Manutenção_2026 (R$)', 'Custo_Combustível_2026 (R$)', 'Multas_2026 (R$)'].forEach(function(name, i) {
    s += rect(312, 87 + i * 10, 5, 5, COST_COLORS[i]);
    s += text(319, 92 + i * 10, '', name);
  });
  document.getElementById('chart-cost').innerHTML = s;
}

function drawStatus() {
  var s = text(124, 21, 'heading', 'Distribuição da Frota por Status');
  s += '<ellipse cx="83.5" cy="113.500" rx="72" ry="77" fill="#4f81bd"/>';
  s += '<path d="M83.5 113.5V36.5A72 77 0 0 0 15 89.700z" fill="#c0504d"/>';
  s += rect(169, 92, 4, 4, '#4f81bd') + text(175, 97, '', 'OK');
  s += rect(169, 102, 4, 4, '#c0504d') + text(175, 107, '', 'Manutenção pendente');
  document.getElementById('chart-status').innerHTML = s;
}

function drawKm() {
  var top = 37.5, step = 15.75;
  var s = text(207, 22, 'heading', 'Km Atual por Veículo');
  // the sheet is cut off below 50000, the rest of the scale is out of view
  for (var i = 0; i <= 3; i++) {
    s += line(50, top + i * step, 350, top + i * step);
    s += text(47, top + i * step + 2, 'value', (80 - i * 10) * 1000);
  }
  s += line(50.5, top, 50.5, top + 8 * step);
  var points = KM.map(function(km, i) {
    return (65 + i * 30) + ',' + (top + (80000 - km) * step / 10000);
  });
  s += '<polyline points="' + points.join(' ') + '" fill="none" stroke="#4a9f86"/>';
  document.getElementById('chart-km').innerHTML = s;
}
```
